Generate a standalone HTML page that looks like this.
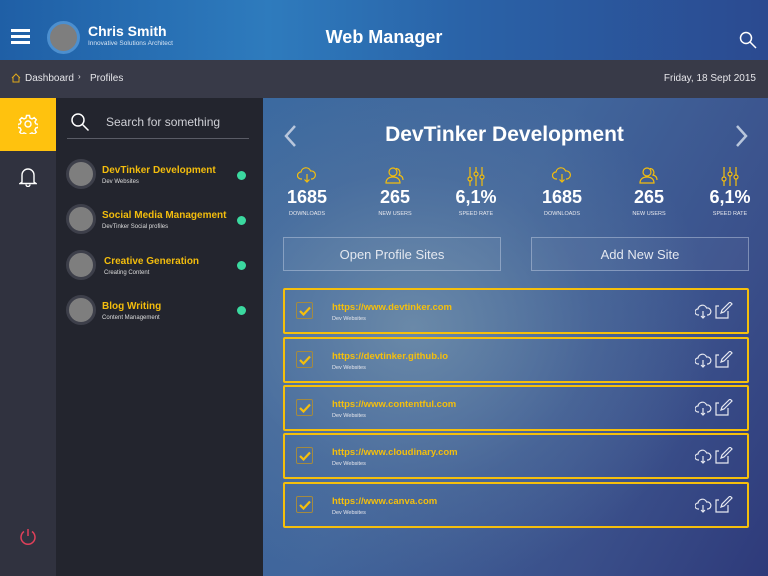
<!DOCTYPE html>
<html><head><style>
*{margin:0;padding:0;box-sizing:border-box}
body{width:768px;height:576px;overflow:hidden;font-family:"Liberation Sans",sans-serif;position:relative;background:#23252e}
.hdr{position:absolute;left:0;top:0;width:768px;height:60px;background:linear-gradient(90deg,#1f5fa6 0%,#2e7bbd 35%,#2a63a8 60%,#2b4a90 100%)}
.bc{position:absolute;left:0;top:60px;width:768px;height:38px;background:#383a48;color:#e6e6ea;font-size:10px}
.side{position:absolute;left:0;top:98px;width:56px;height:478px;background:#30323f}
.list{position:absolute;left:56px;top:98px;width:207px;height:478px;background:#23252e}
.main{position:absolute;left:263px;top:98px;width:505px;height:478px;background:radial-gradient(ellipse 300px 260px at 150px 230px,#6a89a8 0%,rgba(90,120,160,0.4) 60%,rgba(0,0,0,0) 100%),linear-gradient(120deg,#3b6aa0 0%,#41669c 40%,#3a4f8a 75%,#2e3a7a 100%)}
.av{position:absolute;border-radius:50%;background:#7e7e7e;border:3px solid #3d3f4a}
.item .t{position:absolute;left:46px;color:#f3bd0d;font-size:10px;font-weight:bold}
.item .s{position:absolute;left:46px;color:#ddd;font-size:6px}
.dot{position:absolute;left:181px;width:9px;height:9px;border-radius:50%;background:#3bd9a0}
.stat{position:absolute;width:80px;text-align:center;color:#fff}
.stat b{display:block;font-size:18px;position:absolute;top:89px;width:80px}
.stat small{display:block;font-size:5.5px;position:absolute;top:113px;width:80px;color:#e8e8ee}
.stat svg{position:absolute;top:68px;left:30px}
.btn{position:absolute;top:139px;width:218px;height:34px;border:1px solid rgba(200,210,230,0.45);color:#e4e8f0;font-size:13px;text-align:center;line-height:33px;background:rgba(255,255,255,0.04)}
.row{position:absolute;left:20px;width:466px;height:46px;border:2px solid #f5bf0c;border-radius:2px}
.row .cb{position:absolute;left:11px;top:12px;width:17px;height:17px;border:1px solid #a38a40;border-radius:2px}
.row .u{position:absolute;left:47px;top:12px;color:#f5bf0c;font-size:9.5px;font-weight:bold}
.row .d{position:absolute;left:47px;top:26px;color:#e8e8ee;font-size:5.5px}
.row .ic{position:absolute;right:12px;top:12px}
</style></head><body>
<div class="hdr">
 <div style="position:absolute;left:11px;top:35px;width:19px;height:3px;background:#fff;box-shadow:0 -6px 0 #fff,0 6px 0 #fff"></div>
 <div style="position:absolute;left:47px;top:21px;width:33px;height:33px;border-radius:50%;background:#7e7e7e;border:3px solid #4c8fcf"></div>
 <div style="position:absolute;left:88px;top:23px;color:#fff;font-size:14px;font-weight:bold">Chris Smith</div>
 <div style="position:absolute;left:88px;top:40px;color:#d6e4f4;font-size:6.5px">Innovative Solutions Architect</div>
 <div style="position:absolute;left:0;width:768px;top:27px;text-align:center;color:#fff;font-size:18px;font-weight:bold">Web Manager</div>
 <svg style="position:absolute;left:739px;top:31px" width="18" height="18" viewBox="0 0 18 18" fill="none" stroke="#fff" stroke-width="1.5"><circle cx="7" cy="7" r="5.5"/><path d="M11 11l6 6"/></svg>
</div>
<div class="bc">
 <svg style="position:absolute;left:11px;top:13px" width="10" height="10" viewBox="0 0 10 10" fill="none" stroke="#e0a91a" stroke-width="1"><path d="M1 5L5 1l4 4M2 4v5h6V4"/></svg>
 <span style="position:absolute;left:25px;top:13px">Dashboard</span>
 <span style="position:absolute;left:78px;top:12px;font-size:8px">›</span>
 <span style="position:absolute;left:90px;top:13px">Profiles</span>
 <span style="position:absolute;right:12px;top:13px">Friday, 18 Sept 2015</span>
</div>
<div class="side">
 <div style="position:absolute;left:0;top:0;width:56px;height:53px;background:#ffc20e"></div>
 <svg style="position:absolute;left:18px;top:16px" width="20" height="20" viewBox="0 0 20 20" fill="none" stroke="#fff" stroke-width="1.4"><circle cx="10" cy="10" r="3"/><path d="M8.5 1.5h3l.5 2.5 2 1 2.2-1.4 2.1 2.1-1.4 2.2 1 2 2.5.5v3l-2.5.5-1 2 1.4 2.2-2.1 2.1-2.2-1.4-2 1-.5 2.5h-3l-.5-2.5-2-1-2.2 1.4-2.1-2.1 1.4-2.2-1-2-2.5-.5v-3l2.5-.5 1-2-1.4-2.2 2.1-2.1 2.2 1.4 2-1z"/></svg>
 <svg style="position:absolute;left:19px;top:69px" width="18" height="20" viewBox="0 0 18 20" fill="none" stroke="#fff" stroke-width="1.4"><path d="M3 15V8a6 6 0 0112 0v7l2 1.5H1z M7 17.5a2 2 0 004 0"/></svg>
 <svg style="position:absolute;left:19px;top:430px" width="18" height="18" viewBox="0 0 18 18" fill="none" stroke="#e0405a" stroke-width="1.5"><path d="M9 1v7M5 3.5a7 7 0 108 0"/></svg>
</div>
<div class="list">
 <svg style="position:absolute;left:14px;top:14px" width="20" height="20" viewBox="0 0 20 20" fill="none" stroke="#fff" stroke-width="1.5"><circle cx="8" cy="8" r="6"/><path d="M12.5 12.5l6 6"/></svg>
 <div style="position:absolute;left:50px;top:17px;color:#cfd0d6;font-size:12px">Search for something</div>
 <div style="position:absolute;left:11px;top:40px;width:182px;height:1px;background:#5a5c66"></div>
 <div class="item" style="position:absolute;left:10px;top:61px;width:197px;height:40px"><div class="av" style="left:0;top:0;width:30px;height:30px"></div><div class="t" style="left:36px;top:6px">DevTinker Development</div><div class="s" style="left:36px;top:20px">Dev Websites</div><div class="dot" style="left:171px;top:12px"></div></div>
 <div class="item" style="position:absolute;left:10px;top:106px;width:197px;height:40px"><div class="av" style="left:0;top:0;width:30px;height:30px"></div><div class="t" style="left:36px;top:6px">Social Media Management</div><div class="s" style="left:36px;top:20px">DevTinker Social profiles</div><div class="dot" style="left:171px;top:12px"></div></div>
 <div class="item" style="position:absolute;left:10px;top:152px;width:197px;height:40px"><div class="av" style="left:0;top:0;width:30px;height:30px"></div><div class="t" style="left:38px;top:6px">Creative Generation</div><div class="s" style="left:38px;top:20px">Creating Content</div><div class="dot" style="left:171px;top:11px"></div></div>
 <div class="item" style="position:absolute;left:10px;top:197px;width:197px;height:40px"><div class="av" style="left:0;top:0;width:30px;height:30px"></div><div class="t" style="left:36px;top:6px">Blog Writing</div><div class="s" style="left:36px;top:20px">Content Management</div><div class="dot" style="left:171px;top:11px"></div></div>
</div>
<div class="main">
 <svg style="position:absolute;left:20px;top:26px" width="14" height="24" viewBox="0 0 14 24" fill="none" stroke="#b8c6dc" stroke-width="2.5"><path d="M12 2L3 12l9 10"/></svg>
 <svg style="position:absolute;left:472px;top:26px" width="14" height="24" viewBox="0 0 14 24" fill="none" stroke="#b8c6dc" stroke-width="2.5"><path d="M2 2l9 10-9 10"/></svg>
 <div style="position:absolute;left:0;width:483px;top:25px;text-align:center;color:#fff;font-size:21px;font-weight:bold">DevTinker Development</div>
 <div class="stat" style="left:4px"><svg width="20" height="18" viewBox="0 0 20 18" fill="none" stroke="#f3bd0d" stroke-width="1.2"><path d="M5 13H4a3.5 3.5 0 010-7 5 5 0 019.6-1A3.5 3.5 0 1115 13h-1M10 8v8M7.5 13.5L10 16l2.5-2.5"/></svg><b>1685</b><small>DOWNLOADS</small></div>
 <div class="stat" style="left:92px"><svg width="20" height="18" viewBox="0 0 20 18" fill="none" stroke="#f3bd0d" stroke-width="1.2"><circle cx="8" cy="6" r="4"/><path d="M1 17c0-4 3-6 7-6s7 2 7 6zM11 2.5a4 4 0 013 6.5c2 .5 4 2 4 5"/></svg><b>265</b><small>NEW USERS</small></div>
 <div class="stat" style="left:173px"><svg width="20" height="20" viewBox="0 0 20 20" fill="none" stroke="#f3bd0d" stroke-width="1.2"><path d="M4 1v19M10 1v19M16 1v19"/><circle cx="4" cy="13" r="2" fill="#3d669c"/><circle cx="10" cy="8" r="2" fill="#3d669c"/><circle cx="16" cy="11" r="2" fill="#3d669c"/></svg><b>6,1%</b><small>SPEED RATE</small></div>
 <div class="stat" style="left:259px"><svg width="20" height="18" viewBox="0 0 20 18" fill="none" stroke="#f3bd0d" stroke-width="1.2"><path d="M5 13H4a3.5 3.5 0 010-7 5 5 0 019.6-1A3.5 3.5 0 1115 13h-1M10 8v8M7.5 13.5L10 16l2.5-2.5"/></svg><b>1685</b><small>DOWNLOADS</small></div>
 <div class="stat" style="left:346px"><svg width="20" height="18" viewBox="0 0 20 18" fill="none" stroke="#f3bd0d" stroke-width="1.2"><circle cx="8" cy="6" r="4"/><path d="M1 17c0-4 3-6 7-6s7 2 7 6zM11 2.5a4 4 0 013 6.5c2 .5 4 2 4 5"/></svg><b>265</b><small>NEW USERS</small></div>
 <div class="stat" style="left:427px"><svg width="20" height="20" viewBox="0 0 20 20" fill="none" stroke="#f3bd0d" stroke-width="1.2"><path d="M4 1v19M10 1v19M16 1v19"/><circle cx="4" cy="13" r="2" fill="#34478a"/><circle cx="10" cy="8" r="2" fill="#34478a"/><circle cx="16" cy="11" r="2" fill="#34478a"/></svg><b>6,1%</b><small>SPEED RATE</small></div>
 <div class="btn" style="left:20px">Open Profile Sites</div>
 <div class="btn" style="left:268px">Add New Site</div>
 <div class="row" style="top:190px"><div class="cb"></div><svg style="position:absolute;left:14px;top:16px" width="12" height="10" viewBox="0 0 12 10" fill="none" stroke="#f5bf0c" stroke-width="2.2"><path d="M1 5l3.5 3.5L11 1.5"/></svg><div class="u">https://www.devtinker.com</div><div class="d">Dev Websites</div><svg class="ic" width="40" height="18" viewBox="0 0 40 18" fill="none" stroke="#e6e8f0" stroke-width="1.2"><path d="M4 13H3a3 3 0 010-6 4.5 4.5 0 018.6-1A3 3 0 1113 13h-1M8 9v7M6 14l2 2 2-2"/><path d="M24 4h-3v12h12v-7M26 11l1-3 8-8 2 2-8 8z"/></svg></div>
 <div class="row" style="top:239px"><div class="cb"></div><svg style="position:absolute;left:14px;top:16px" width="12" height="10" viewBox="0 0 12 10" fill="none" stroke="#f5bf0c" stroke-width="2.2"><path d="M1 5l3.5 3.5L11 1.5"/></svg><div class="u">https://devtinker.github.io</div><div class="d">Dev Websites</div><svg class="ic" width="40" height="18" viewBox="0 0 40 18" fill="none" stroke="#e6e8f0" stroke-width="1.2"><path d="M4 13H3a3 3 0 010-6 4.5 4.5 0 018.6-1A3 3 0 1113 13h-1M8 9v7M6 14l2 2 2-2"/><path d="M24 4h-3v12h12v-7M26 11l1-3 8-8 2 2-8 8z"/></svg></div>
 <div class="row" style="top:287px"><div class="cb"></div><svg style="position:absolute;left:14px;top:16px" width="12" height="10" viewBox="0 0 12 10" fill="none" stroke="#f5bf0c" stroke-width="2.2"><path d="M1 5l3.5 3.5L11 1.5"/></svg><div class="u">https://www.contentful.com</div><div class="d">Dev Websites</div><svg class="ic" width="40" height="18" viewBox="0 0 40 18" fill="none" stroke="#e6e8f0" stroke-width="1.2"><path d="M4 13H3a3 3 0 010-6 4.5 4.5 0 018.6-1A3 3 0 1113 13h-1M8 9v7M6 14l2 2 2-2"/><path d="M24 4h-3v12h12v-7M26 11l1-3 8-8 2 2-8 8z"/></svg></div>
 <div class="row" style="top:335px"><div class="cb"></div><svg style="position:absolute;left:14px;top:16px" width="12" height="10" viewBox="0 0 12 10" fill="none" stroke="#f5bf0c" stroke-width="2.2"><path d="M1 5l3.5 3.5L11 1.5"/></svg><div class="u">https://www.cloudinary.com</div><div class="d">Dev Websites</div><svg class="ic" width="40" height="18" viewBox="0 0 40 18" fill="none" stroke="#e6e8f0" stroke-width="1.2"><path d="M4 13H3a3 3 0 010-6 4.5 4.5 0 018.6-1A3 3 0 1113 13h-1M8 9v7M6 14l2 2 2-2"/><path d="M24 4h-3v12h12v-7M26 11l1-3 8-8 2 2-8 8z"/></svg></div>
 <div class="row" style="top:384px"><div class="cb"></div><svg style="position:absolute;left:14px;top:16px" width="12" height="10" viewBox="0 0 12 10" fill="none" stroke="#f5bf0c" stroke-width="2.2"><path d="M1 5l3.5 3.5L11 1.5"/></svg><div class="u">https://www.canva.com</div><div class="d">Dev Websites</div><svg class="ic" width="40" height="18" viewBox="0 0 40 18" fill="none" stroke="#e6e8f0" stroke-width="1.2"><path d="M4 13H3a3 3 0 010-6 4.5 4.5 0 018.6-1A3 3 0 1113 13h-1M8 9v7M6 14l2 2 2-2"/><path d="M24 4h-3v12h12v-7M26 11l1-3 8-8 2 2-8 8z"/></svg></div>
</div>
</body></html>
